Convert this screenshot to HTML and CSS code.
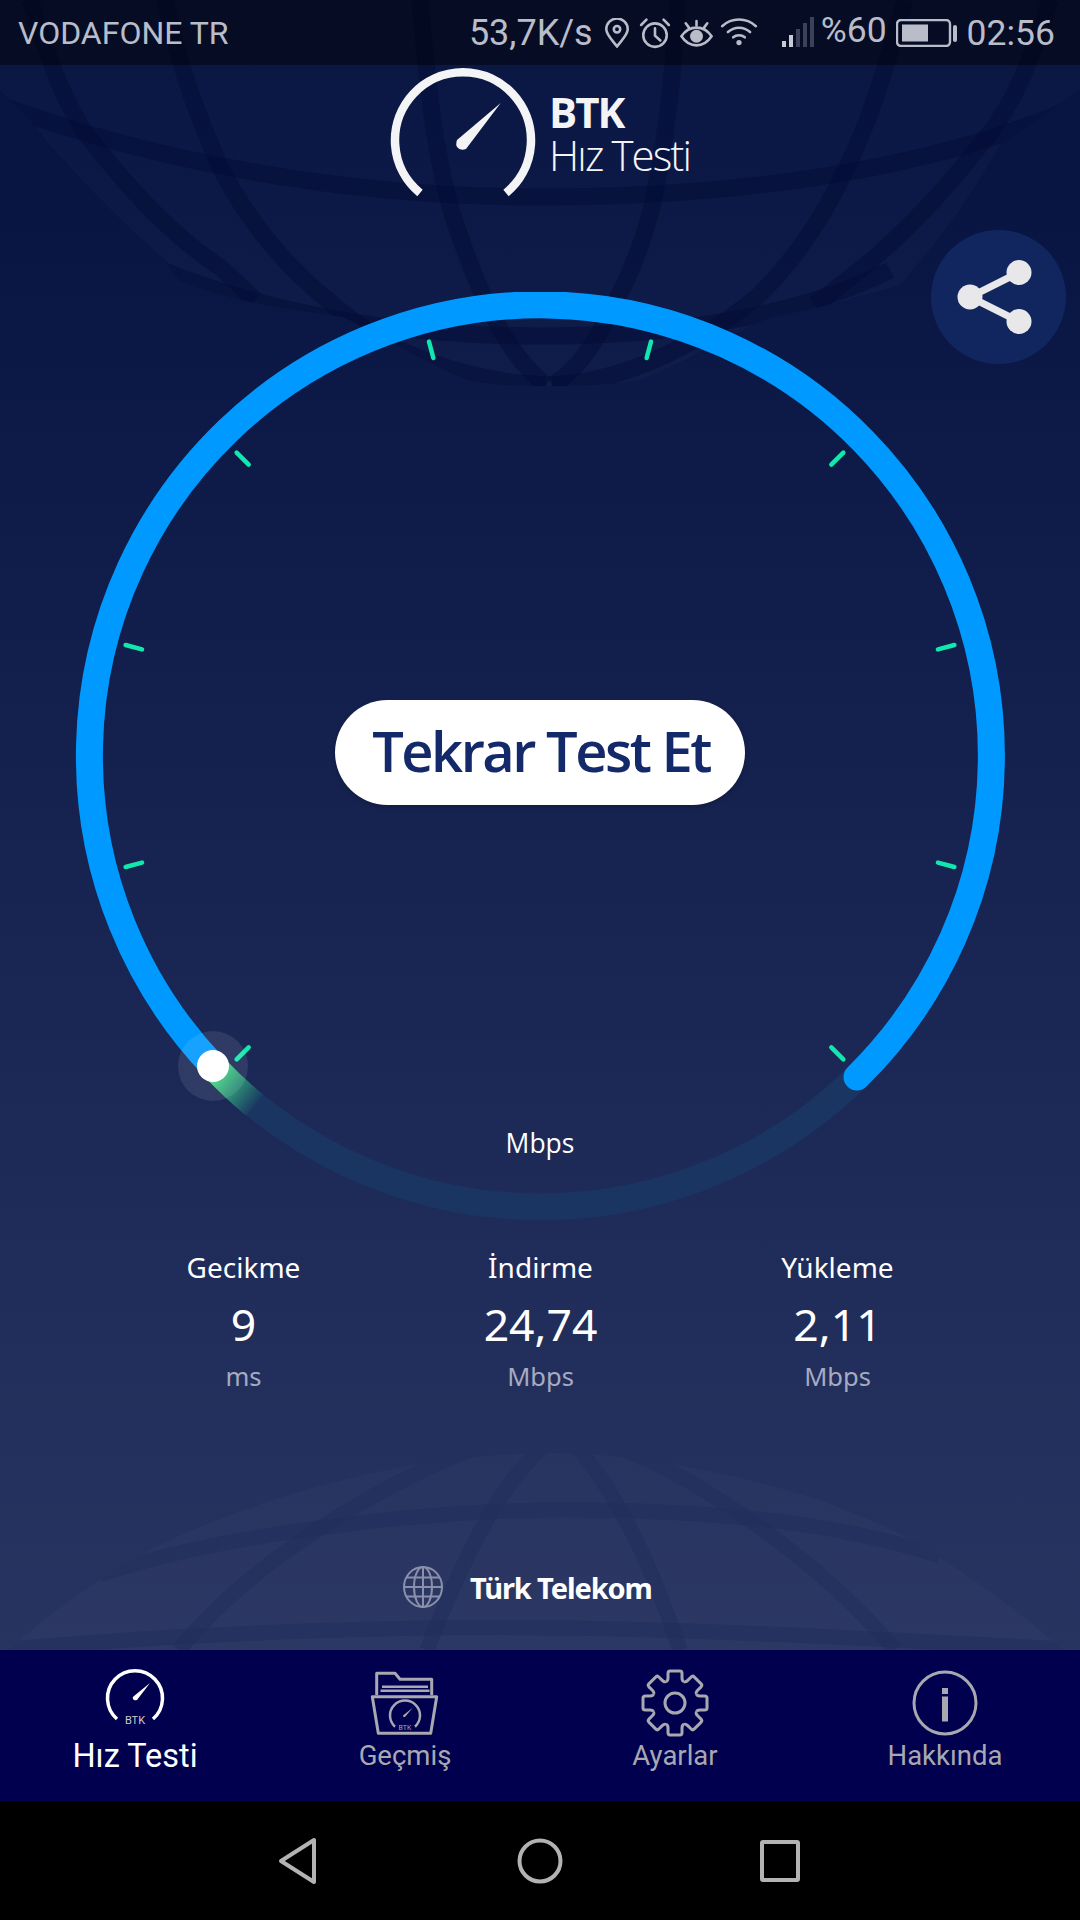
FILE: index.html
```html
<!DOCTYPE html>
<html lang="tr">
<head>
<meta charset="utf-8">
<title>BTK Hız Testi</title>
<link rel="stylesheet" href="styles.css">
</head>
<body>
<div class="screen">
  <div class="app">
    <svg class="globes" viewBox="0 0 1080 1650" width="1080" height="1650" aria-hidden="true">
      <defs>
        <clipPath id="top-globe"><path d="M0,0 L0,90 L28,117 L48,143 C90,190 130,230 165,260 L179,280 C240,305 300,310 344,317 C390,340 430,365 468,380 C500,388 590,388 640,380 C680,365 720,340 770,317 C810,310 850,300 900,285 C940,240 975,190 1000,145 L1040,117 L1080,90 L1080,0 Z"/></clipPath>
        <clipPath id="low-globe"><path d="M10,1650 C40,1620 90,1585 131,1560 C200,1520 330,1475 448,1460 C490,1454 530,1453 565,1453 C650,1456 720,1470 820,1500 C860,1515 890,1528 916,1542 C960,1570 1020,1610 1062,1650 Z"/></clipPath>
      </defs>
      <g clip-path="url(#top-globe)">
        <rect class="globe-fill" width="1080" height="420"/>
        <g class="globe-lines">
          <path d="M0,105 C150,160 340,197 540,197 C740,197 930,170 1080,105"/>
          <path d="M150,265 C280,320 420,336 540,336 C660,336 790,320 890,270"/>
          <path d="M420,0 C430,120 440,170 451,210 C462,245 472,270 482,293 C500,335 525,370 546,385"/>
          <path d="M678,0 C670,120 660,170 651,210 C642,245 632,270 620,293 C600,335 580,370 552,385"/>
          <path d="M165,0 C185,90 205,130 220,167 C250,225 285,265 324,297 C345,315 365,330 386,343 C440,370 500,384 546,385"/>
          <path d="M905,0 C880,90 865,130 847,167 C820,225 790,265 757,297 C735,315 712,330 689,343 C640,370 590,384 552,385"/>
          <path d="M30,0 C55,80 68,105 83,130 C125,185 170,235 220,267 L255,300"/>
          <path d="M1050,0 C1025,80 1010,105 992,130 C950,185 900,240 847,280 L815,305"/>
        </g>
      </g>
      <g clip-path="url(#low-globe)">
        <rect class="globe-fill" y="1440" width="1080" height="210"/>
        <g class="globe-lines-low">
          <path d="M100,1575 C200,1540 400,1510 565,1510 C700,1510 830,1520 940,1556"/>
          <path d="M0,1650 C200,1632 400,1626 560,1628 C720,1630 900,1640 1080,1650"/>
          <path d="M545,1445 C505,1480 470,1540 427,1650"/>
          <path d="M575,1445 C615,1490 650,1560 680,1650"/>
          <path d="M470,1450 C390,1480 250,1560 179,1650"/>
          <path d="M625,1450 C700,1480 820,1560 895,1650"/>
        </g>
      </g>
    </svg>

    <header class="status">
      <span class="carrier">VODAFONE TR</span>
      <div class="status-right">
        <span class="speed">53,7K/s</span>
        <svg class="ic-pin" viewBox="0 0 24 28" width="26" height="30"><path d="M12 26.5C7 20 2 15.500 2 10.500a10 10 0 0 1 20 0C22 15.500 17 20 12 26.500Z"/><circle cx="12" cy="10.500" r="3"/></svg>
        <svg class="ic-alarm" viewBox="0 0 30 30" width="32" height="32"><circle cx="15" cy="17" r="11"/><path d="M15 10.500V17.500L20 22"/><path d="M2 7.500L7 2.500M28 7.500L23 2.500"/></svg>
        <svg class="ic-eye" viewBox="0 0 32 26" width="35" height="28"><path d="M2 16C6 10 11 8 16 8s10 2 14 8c-4 6-9 8.500-14 8.500S6 22 2 16Z"/><circle class="solid" cx="16" cy="16" r="6"/><path d="M16 2V6M6 4L9 8M26 4L23 8"/></svg>
        <svg class="ic-wifi" viewBox="0 0 36 28" width="38" height="30"><path d="M2 9.500C11 1 25 1 34 9.500"/><path d="M7.500 15C13.500 9.500 22.500 9.500 28.500 15"/><path d="M12.500 20C15.500 17.500 20.500 17.500 23.500 20"/><circle class="solid" cx="18" cy="25" r="2.500"/></svg>
        <svg class="ic-signal" viewBox="0 0 32 30" width="32" height="30"><rect class="bar" x="0" y="24" width="4" height="6"/><rect class="bar" x="7" y="18" width="4" height="12"/><rect class="bar off" x="14" y="12" width="4" height="18"/><rect class="bar off" x="21" y="6" width="4" height="24"/><rect class="bar off" x="28" y="0" width="4" height="30"/></svg>
        <span class="percent">%60</span>
        <svg class="ic-batt" viewBox="0 0 61 28" width="61" height="28"><rect x="1" y="1" width="53" height="26" rx="4"/><rect class="solid" x="6" y="5.500" width="26" height="17"/><rect class="solid" x="57" y="6" width="4" height="17" rx="2"/></svg>
        <span class="time">02:56</span>
      </div>
    </header>

    <main class="main">
      <div class="logo">
        <svg class="logo-mark" viewBox="385 65 155 135" width="155" height="135">
          <path class="logo-arc" d="M420,193 A68,68 0 1 1 506,193"/>
          <path class="logo-needle" d="M500.700,103 L466,149 Q461,151 458,148 Q455,145 457,140 Z"/>
        </svg>
        <div class="logo-text">
          <span class="logo-btk">BTK</span>
          <span class="logo-name">Hız Testi</span>
        </div>
      </div>

      <section class="gauge">
        <svg class="dial" viewBox="0 0 1080 928" width="1080" height="928">
          <defs>
            <linearGradient id="glow" gradientUnits="userSpaceOnUse" x1="216" y1="780" x2="258" y2="812">
              <stop offset="0" stop-color="#45dc80"/>
              <stop offset=".4" stop-color="#2f9a78"/>
              <stop offset="1" stop-color="#1a3562"/>
            </linearGradient>
          </defs>
          <path class="track" d="M857,785 A451,451 0 0 1 213,774"/>
          <path class="glow" d="M213,774 A451,451 0 0 0 255,813.500"/>
          <path class="arc" d="M213,774 A451,451 0 1 1 857,785"/>
          <g class="ticks">
            <line x1="540" y1="35" x2="540" y2="52" transform="rotate(15 540 464)"/>
            <line x1="540" y1="35" x2="540" y2="52" transform="rotate(45 540 464)"/>
            <line x1="540" y1="35" x2="540" y2="52" transform="rotate(75 540 464)"/>
            <line x1="540" y1="35" x2="540" y2="52" transform="rotate(105 540 464)"/>
            <line x1="540" y1="35" x2="540" y2="52" transform="rotate(135 540 464)"/>
            <line x1="540" y1="35" x2="540" y2="52" transform="rotate(-15 540 464)"/>
            <line x1="540" y1="35" x2="540" y2="52" transform="rotate(-45 540 464)"/>
            <line x1="540" y1="35" x2="540" y2="52" transform="rotate(-75 540 464)"/>
            <line x1="540" y1="35" x2="540" y2="52" transform="rotate(-105 540 464)"/>
            <line x1="540" y1="35" x2="540" y2="52" transform="rotate(-135 540 464)"/>
          </g>
          <circle class="halo" cx="213" cy="774" r="35"/>
          <circle class="knob" cx="213" cy="774" r="16"/>
        </svg>
        <button class="retest">Tekrar Test Et</button>
        <span class="unit">Mbps</span>
        <button class="share" aria-label="Paylaş">
          <svg viewBox="-4 0 84 92" width="84" height="92"><path class="share-line" d="M58 21.500L9 46L58 70.500"/><circle cx="9" cy="46" r="12.500"/><circle cx="58" cy="21.500" r="12.500"/><circle cx="58" cy="70.500" r="12.500"/></svg>
        </button>
      </section>

      <section class="stats">
        <div class="stat"><span class="stat-label">Gecikme</span><span class="stat-value">9</span><span class="stat-unit">ms</span></div>
        <div class="stat"><span class="stat-label">İndirme</span><span class="stat-value">24,74</span><span class="stat-unit">Mbps</span></div>
        <div class="stat"><span class="stat-label">Yükleme</span><span class="stat-value">2,11</span><span class="stat-unit">Mbps</span></div>
      </section>

      <div class="operator">
        <svg class="op-globe" viewBox="0 0 40 42" width="40" height="42"><ellipse cx="20" cy="21" rx="19" ry="20"/><ellipse cx="20" cy="21" rx="9" ry="20"/><path d="M20 1V41M1.500 21H38.500M4 11.500H36M4 30.500H36"/></svg>
        <span class="op-name">Türk Telekom</span>
      </div>
    </main>
  </div>

  <nav class="tabs">
    <a class="tab active">
      <svg viewBox="0 0 70 70" width="70" height="70">
        <path class="ln" d="M17,51 A27.500,27.500 0 1 1 53,51"/>
        <path class="fl" d="M50,15 L37,32 Q34,33 33,31 Q32,29 34,28 Z"/>
        <text class="tiny" x="35" y="56">BTK</text>
      </svg>
      <span>Hız Testi</span>
    </a>
    <a class="tab">
      <svg viewBox="0 0 70 70" width="70" height="70">
        <path class="ln" d="M6.700,27V5.300H25L30,11.300H61.700V27"/>
        <path class="ln thin" d="M12,18.700H58M10.500,22.700H59.500"/>
        <path class="ln" d="M2.300,28.700H66.700L60.700,65.300H8.300Z"/>
        <path class="ln thin" d="M25,58.700A15,15 0 1 1 45,58.700"/>
        <path class="fl" d="M42.700,39.700L35,49Q33,49.500 33,47.500Z"/>
        <text class="micro" x="35" y="62">BTK</text>
      </svg>
      <span>Geçmiş</span>
    </a>
    <a class="tab">
      <svg viewBox="-35 -35 70 70" width="70" height="70">
        <defs><path id="tooth" d="M-8.900,-21.500Q-7,-22 -7,-25L-7,-29.500Q-7,-32 -5,-32L5,-32Q7,-32 7,-29.500L7,-25Q7,-22 8.900,-21.500"/></defs>
        <g class="ln">
          <use href="#tooth"/>
          <use href="#tooth" transform="rotate(45)"/>
          <use href="#tooth" transform="rotate(90)"/>
          <use href="#tooth" transform="rotate(135)"/>
          <use href="#tooth" transform="rotate(180)"/>
          <use href="#tooth" transform="rotate(225)"/>
          <use href="#tooth" transform="rotate(270)"/>
          <use href="#tooth" transform="rotate(315)"/>
          <circle r="10"/>
        </g>
      </svg>
      <span>Ayarlar</span>
    </a>
    <a class="tab">
      <svg viewBox="0 0 70 70" width="70" height="70">
        <circle class="ln" cx="35" cy="35" r="31"/>
        <rect class="fl" x="32" y="20" width="6" height="6"/>
        <rect class="fl" x="32" y="28.500" width="6" height="25"/>
      </svg>
      <span>Hakkında</span>
    </a>
  </nav>

  <div class="sysnav">
    <svg viewBox="0 0 41 48" width="41" height="48"><path d="M37 3V45L4 24Z"/></svg>
    <svg viewBox="0 0 46 46" width="46" height="46"><circle cx="23" cy="23" r="20.500"/></svg>
    <svg viewBox="0 0 42 42" width="42" height="42"><rect x="3" y="2" width="36" height="38" rx="1"/></svg>
  </div>
</div>
</body>
</html>
```
FILE: styles.css
```css
* { box-sizing: border-box; }
html, body { margin: 0; padding: 0; background: #000; }
.screen { width: 1080px; height: 1920px; display: flex; flex-direction: column; overflow: hidden; font-family: Roboto, sans-serif; }
.app { position: relative; height: 1650px; background: linear-gradient(180deg, #071340 0%, #081442 12%, #14214e 45%, #1e2b58 72%, #283460 100%); overflow: hidden; }
.globes { position: absolute; left: 0; top: 0; }
.globe-fill { fill: rgba(255, 255, 255, 0.02); }
.globe-lines path { fill: none; stroke: #020b35; stroke-opacity: .5; stroke-width: 17; }
.globe-lines-low path { fill: none; stroke: #1f2b59; stroke-opacity: .5; stroke-width: 15; }

.status { position: relative; height: 65px; display: flex; align-items: center; justify-content: space-between; padding: 0 25px 0 18px; background: rgba(0, 0, 0, .45); color: #b9bdc9; font-size: 32px; }
.status-right { display: flex; align-items: center; font-size: 35.500px; }
.status svg { fill: none; stroke: #b9bdc9; stroke-width: 2.400; stroke-linecap: round; }
.status svg .solid { fill: #b9bdc9; stroke: none; }
.status svg .bar { fill: #c8cad4; stroke: none; }
.status svg .bar.off { fill: #3c415a; }
.speed { font-size: 36px; }
.ic-pin { margin-left: 11px; }
.ic-alarm { margin-left: 9px; }
.ic-eye { margin-left: 8px; }
.ic-wifi { margin-left: 6px; margin-bottom: 4px; }
.ic-signal { margin-left: 24px; margin-bottom: 2px; }
.percent { margin-left: 7px; margin-bottom: 6px; }
.ic-batt { margin-left: 9px; }
.time { margin-left: 10px; }

.main { position: relative; display: flex; flex-direction: column; }
.logo { display: flex; align-items: center; height: 135px; padding-left: 385px; }
.logo-mark { display: block; }
.logo-arc { fill: none; stroke: #f4f4f6; stroke-width: 8.500; }
.logo-needle { fill: #f4f4f6; }
.logo-text { display: flex; flex-direction: column; margin-left: 9px; margin-top: 1px; color: #f4f4f6; font-family: "Open Sans", sans-serif; }
.logo-btk { font-size: 42px; font-weight: 700; line-height: 44px; letter-spacing: -2px; }
.logo-name { font-size: 42px; font-weight: 300; line-height: 42px; letter-spacing: -1.900px; }

.gauge { position: relative; margin-top: 92px; height: 928px; }
.dial { display: block; }
.track { fill: none; stroke: #1a3562; stroke-width: 27; }
.glow { fill: none; stroke: url(#glow); stroke-width: 27; }
.arc { fill: none; stroke: #0099ff; stroke-width: 27; stroke-linecap: round; }
.ticks line { stroke: #12e8ad; stroke-width: 4.500; stroke-linecap: round; }
.halo { fill: rgba(255, 255, 255, .09); }
.knob { fill: #fff; }
.retest { position: absolute; left: 335px; top: 408px; width: 410px; height: 105px; border: 0; border-radius: 53px; background: #fff; color: #14296a; font-family: "Open Sans", sans-serif; font-size: 56px; font-weight: 600; letter-spacing: -2.500px; padding: 0 0 6px 2px; box-shadow: 0 2px 4px rgba(0, 0, 0, .2); }
.unit { position: absolute; left: 0; right: 0; top: 833px; text-align: center; color: #fff; font-family: "Open Sans", sans-serif; font-size: 26.500px; line-height: 36px; }
.share { position: absolute; left: 931px; top: -62px; width: 135px; height: 134px; border: 0; border-radius: 50%; background: #11265f; padding: 0; display: flex; align-items: center; justify-content: center; }
.share svg { fill: #e8e8ea; }
.share-line { fill: none; stroke: #e8e8ea; stroke-width: 7; }

.stats { display: grid; grid-template-columns: repeat(3, 297px); padding-left: 95px; margin-top: 27px; }
.stat { display: flex; flex-direction: column; align-items: center; font-family: "Noto Sans", sans-serif; color: #fff; }
.stat-label { font-size: 28px; line-height: 40px; }
.stat-value { font-size: 44.500px; line-height: 62px; margin-top: 6px; }
.stat-unit { font-size: 25.500px; line-height: 36px; margin-top: 3px; color: #a6abc0; }

.operator { display: flex; align-items: center; gap: 27px; padding-left: 403px; margin-top: 172px; }
.op-globe { fill: none; stroke: #8a90ab; stroke-width: 2; }
.op-name { font-family: "Noto Sans", sans-serif; font-size: 29px; font-weight: 700; letter-spacing: -1.100px; color: #fff; }

.tabs { height: 151px; background: #00004f; display: grid; grid-template-columns: repeat(4, 270px); }
.tab { display: flex; flex-direction: column; align-items: center; padding-top: 18px; color: #a8a8b0; font-size: 27.500px; line-height: 36px; }
.tab svg { display: block; }
.tab.active { color: #fff; font-size: 32.500px; }
.ln { fill: none; stroke: #a8a8b0; stroke-width: 3; stroke-linejoin: round; }
.ln.thin { stroke-width: 2.500; }
.fl { fill: #a8a8b0; }
.tab.active .ln { stroke: #fff; stroke-width: 3.500; }
.tab.active .fl { fill: #fff; }
.tiny { font-family: Roboto, sans-serif; font-size: 11px; fill: #ccc; text-anchor: middle; }
.micro { font-family: Roboto, sans-serif; font-size: 7px; fill: #a8a8b0; text-anchor: middle; }

.sysnav { flex: 1; background: #000; display: flex; align-items: center; justify-content: center; padding: 1px 2px 0 0; }
.sysnav svg { fill: none; stroke: #b3b3b3; stroke-width: 4; stroke-linejoin: round; }
.sysnav svg:nth-child(1) { margin-right: 199px; }
.sysnav svg:nth-child(2) { margin-right: 196px; }
```
